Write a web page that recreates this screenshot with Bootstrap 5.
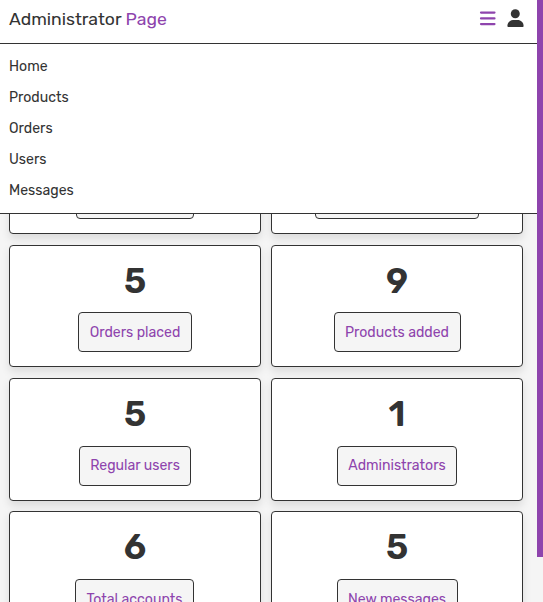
<!DOCTYPE html>
<html lang="en">
<head>
<meta charset="utf-8">
<meta name="viewport" content="width=device-width, initial-scale=1">
<title>Administrator Page</title>
<link rel="stylesheet" href="https://cdn.jsdelivr.net/npm/bootstrap@5.3.0/dist/css/bootstrap.min.css">
<style>
:root { --ink: #333; --accent: #8e44ad; --page: #f5f5f5; }
body { font-family: Rubik, Roboto, sans-serif; font-weight: 400; color: var(--ink); background: var(--page); }
.app-header { height: 44px; padding: 0 13px 5px 9px; border-bottom: 1px solid var(--ink); }
.brand { font-size: 17.6px; line-height: 20px; color: var(--ink); }
.brand span, .action { color: var(--accent); }
.menu { height: 170px; padding: 7px 9px; border-bottom: 1px solid var(--ink); }
.menu a { font-size: 14.1px; line-height: 31px; color: var(--ink); }
.stats { display: grid; grid-template-columns: 252px 252px; gap: 10.8px 10px; margin: -102.1px 0 0 9px; }
.stat { height: 122.4px; border: 1px solid var(--ink); border-radius: 4px; box-shadow: 0 4.4px 8.8px rgba(0,0,0,.1); }
.count { height: 66.3px; padding-top: 15px; font-weight: 600; font-size: 35.2px; line-height: 40px; }
.action { height: 40px; font-size: 14.1px; line-height: 39px; background: var(--page); border: 1px solid var(--ink); border-radius: 4px; }
.w-a { width: 118px; } .w-b { width: 164px; } .w-c { width: 114px; } .w-d { width: 127px; }
.w-e { width: 112px; } .w-f { width: 120px; } .w-g { width: 119px; margin-left: 65px; } .w-h { width: 121px; }
.w-e, .w-f { line-height: 38.7px; }
.menu-icon { margin-right: 9px; }
.track { width: 6px; }
.thumb { height: 557px; background: var(--accent); }
</style>
</head>
<body class="d-flex vh-100 overflow-hidden">
<div class="d-flex flex-column flex-grow-1 overflow-hidden">
  <header class="app-header bg-white d-flex align-items-center justify-content-between flex-shrink-0">
    <a class="brand text-decoration-none" href="#">Administrator <span>Page</span></a>
    <div class="d-flex align-items-center">
      <svg class="menu-icon" width="18" height="18" viewBox="0 0 18 18" fill="none" stroke="#8e44ad" stroke-width="2.2" stroke-linecap="round"><path d="M2 2.6h13.500M2 8.400h13.500M2 14.100h13.500"/></svg>
      <svg width="18" height="20" viewBox="0 0 18 20" fill="#333"><circle cx="9.3" cy="4.700" r="4.500"/><path d="M7 11h4.600c3.300 0 6 2.600 6 5.900 0 .7-.5 1.100-1.100 1.100H2.500c-.6 0-1.100-.4-1.100-1.100C1.400 13.600 4 11 7 11z"/></svg>
    </div>
  </header>
  <nav class="menu bg-white d-flex flex-column flex-shrink-0">
    <a class="text-decoration-none" href="#">Home</a>
    <a class="text-decoration-none" href="#">Products</a>
    <a class="text-decoration-none" href="#">Orders</a>
    <a class="text-decoration-none" href="#">Users</a>
    <a class="text-decoration-none" href="#">Messages</a>
  </nav>
  <main class="flex-grow-1 overflow-hidden">
    <div class="stats text-center">
      <section class="stat bg-white"><div class="count"></div><div class="action w-a mx-auto"></div></section>
      <section class="stat bg-white"><div class="count"></div><div class="action w-b mx-auto"></div></section>
      <section class="stat bg-white"><div class="count">5</div><a href="#" class="action w-c d-block mx-auto text-decoration-none">Orders placed</a></section>
      <section class="stat bg-white"><div class="count">9</div><a href="#" class="action w-d d-block mx-auto text-decoration-none">Products added</a></section>
      <section class="stat bg-white"><div class="count">5</div><a href="#" class="action w-e d-block mx-auto text-decoration-none">Regular users</a></section>
      <section class="stat bg-white"><div class="count">1</div><a href="#" class="action w-f d-block mx-auto text-decoration-none">Administrators</a></section>
      <section class="stat bg-white"><div class="count">6</div><a href="#" class="action w-g d-block text-decoration-none">Total accounts</a></section>
      <section class="stat bg-white"><div class="count">5</div><a href="#" class="action w-h d-block mx-auto text-decoration-none">New messages</a></section>
    </div>
  </main>
</div>
<div class="track flex-shrink-0"><div class="thumb"></div></div>
<script src="https://cdn.jsdelivr.net/npm/bootstrap@5.3.0/dist/js/bootstrap.bundle.min.js"></script>
</body>
</html>
